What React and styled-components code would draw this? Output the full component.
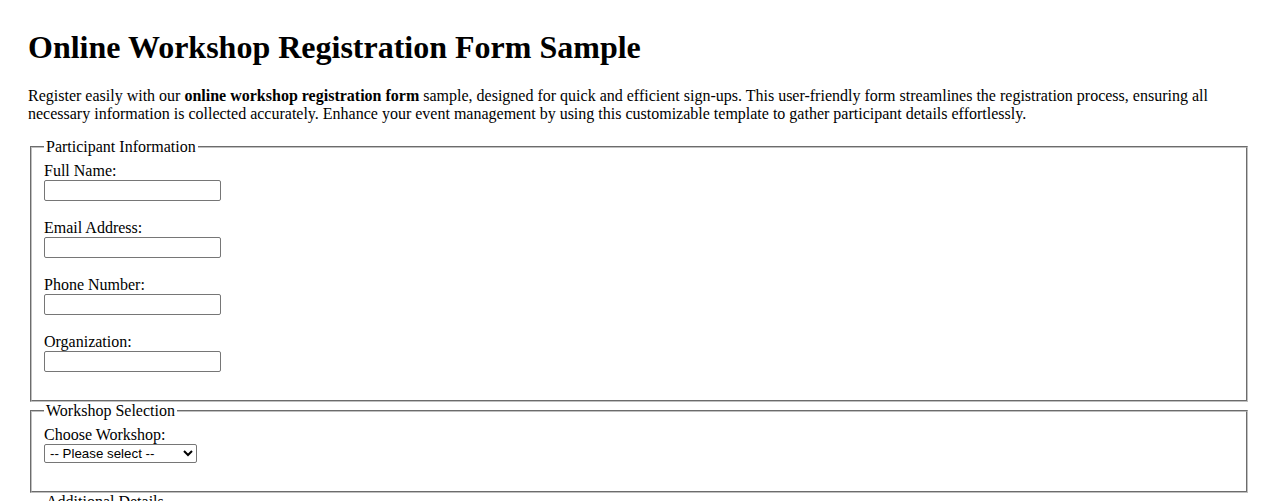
import React from 'react';
import styled, { createGlobalStyle } from 'styled-components';

const GlobalStyle = createGlobalStyle`
  body {
    margin: 0;
    background: #fff;
    color: #000;
    font-family: "Liberation Serif", "Times New Roman", serif;
    font-size: 16px;
  }
`;

const Page = styled.div`
  padding: 29px 28px 28px;
`;

const Title = styled.h1`
  margin: 0 0 0.67em;
  font-size: 2em;
  font-weight: bold;
`;

const Intro = styled.p`
  margin: 0 0 15px;
  line-height: normal;

  strong {
    font-weight: bold;
  }
`;

const Section = styled.fieldset`
  margin: 0 2px;
  padding: 0.35em 0.75em 0.625em;
  border: 2px groove rgb(192, 192, 192);
  min-width: min-content;
`;

const Legend = styled.legend`
  padding: 0 2px;
`;

const Field = styled.div`
  margin-bottom: 18px;
`;

const Label = styled.label`
  display: block;
  height: 18px;
  line-height: 18px;
`;

const TextInput = styled.input`
  display: block;
  box-sizing: border-box;
  width: 177px;
  height: 21px;
  margin: 0;
  padding: 1px 2px;
  border: 1px solid #767676;
  border-radius: 2px;
  background: #fff;
  font-family: "Liberation Sans", Arial, sans-serif;
  font-size: 13.33px;
`;

const Select = styled.select`
  display: block;
  box-sizing: border-box;
  width: 153px;
  height: 19px;
  margin: 0;
  padding: 0 0 0 1px;
  border: 1px solid #767676;
  border-radius: 2px;
  background: #fff;
  color: #000;
  font-family: "Liberation Sans", Arial, sans-serif;
  font-size: 13.33px;
`;

const TextArea = styled.textarea`
  display: block;
  width: 300px;
  height: 60px;
  font-family: "Liberation Mono", monospace;
  font-size: 13.33px;
`;

const participantFields = [
  { id: 'fullName', label: 'Full Name:', type: 'text' },
  { id: 'email', label: 'Email Address:', type: 'email' },
  { id: 'phone', label: 'Phone Number:', type: 'tel' },
  { id: 'organization', label: 'Organization:', type: 'text' },
];

const workshops = [
  'Introduction to Data Science',
  'Advanced Web Development',
  'Project Management Essentials',
  'Creative Writing Workshop',
];

export default function App() {
  return (
    <>
      <GlobalStyle />
      <Page>
        <Title>Online Workshop Registration Form Sample</Title>
        <Intro>
          Register easily with our <strong>online workshop registration form</strong> sample,
          designed for quick and efficient sign-ups. This user-friendly form streamlines the
          registration process, ensuring all necessary information is collected accurately.
          Enhance your event management by using this customizable template to gather
          participant details effortlessly.
        </Intro>
        <form onSubmit={e => e.preventDefault()}>
          <Section>
            <Legend>Participant Information</Legend>
            {participantFields.map(f => (
              <Field key={f.id}>
                <Label htmlFor={f.id}>{f.label}</Label>
                <TextInput id={f.id} name={f.id} type={f.type} />
              </Field>
            ))}
          </Section>
          <Section>
            <Legend>Workshop Selection</Legend>
            <Field>
              <Label htmlFor="workshop">Choose Workshop:</Label>
              <Select id="workshop" name="workshop" defaultValue="">
                <option value="">-- Please select --</option>
                {workshops.map(w => (
                  <option key={w} value={w}>{w}</option>
                ))}
              </Select>
            </Field>
          </Section>
          <Section>
            <Legend>Additional Details</Legend>
            <Field>
              <Label htmlFor="notes">Special Requirements:</Label>
              <TextArea id="notes" name="notes" />
            </Field>
          </Section>
        </form>
      </Page>
    </>
  );
}
